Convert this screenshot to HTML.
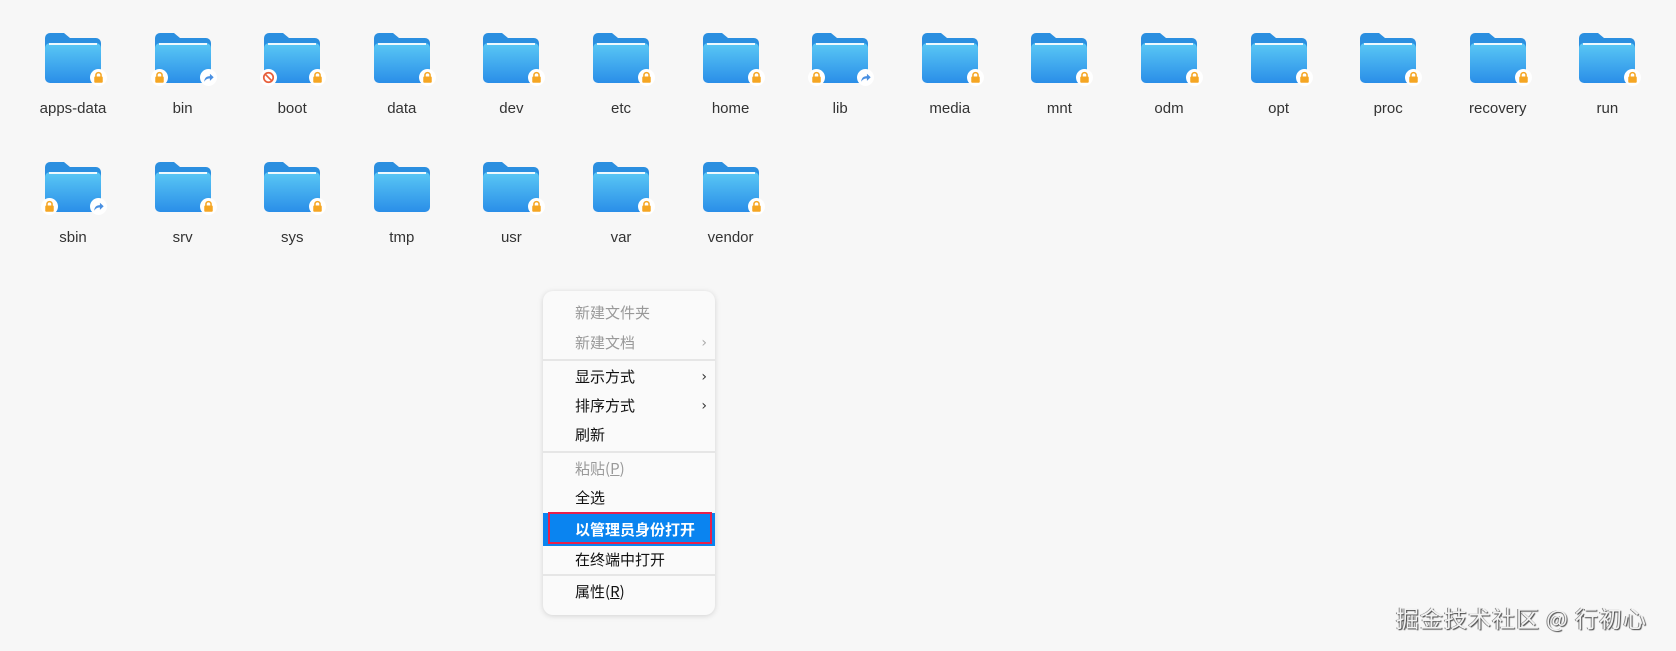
<!DOCTYPE html>
<html><head><meta charset="utf-8"><style>
body{margin:0;width:1676px;height:651px;background:#f7f7f7;font-family:"Liberation Sans","Noto Sans CJK SC",sans-serif;overflow:hidden;position:relative}
.it{position:absolute;width:110px;text-align:center}
.it svg{display:block;margin:0 auto}
.lb{font-size:15px;color:#333;margin-top:16px}
.menu{position:absolute;left:543px;top:291px;width:172px;height:324px;background:#fafafa;border-radius:10px;box-shadow:0 1px 6px rgba(0,0,0,.15)}
.mi{position:absolute;left:0;right:0;height:30px;line-height:30px;padding-left:32px;font-size:15px;color:#111;font-family:"Noto Sans CJK SC",sans-serif}
.dis{color:#999}
.sep{position:absolute;left:0;right:0;height:2px;background:#e6e6e6}
.ar{position:absolute;right:8px;top:0;font-size:14px;color:#333;font-family:"DejaVu Sans",sans-serif}
.wm{position:absolute;left:1396px;top:600px;font-size:23px;color:#f2f2f2;font-family:"Noto Sans CJK SC",sans-serif;text-shadow:1px 1px 1px #444,-1px 0 0 #888;letter-spacing:1px}
</style></head><body>
<svg width="0" height="0" style="position:absolute"><defs>
<linearGradient id="g" x1="0" y1="0" x2="0" y2="1"><stop offset="0" stop-color="#5ac8f5"/><stop offset="1" stop-color="#2a8ee8"/></linearGradient>
<symbol id="f" viewBox="0 0 58 52"><path d="M1 6a5 5 0 0 1 5-5h14l6 5h26a5 5 0 0 1 5 5v30H1z" fill="#2b8fe0"/><rect x="1" y="11" width="56" height="40" rx="5" fill="url(#g)"/><path d="M5 12h48" stroke="#fff" stroke-width="2" opacity=".9"/></symbol>
<symbol id="lk" viewBox="0 0 18 18"><circle cx="9" cy="9" r="9" fill="#fff"/><rect x="4.5" y="8" width="9" height="6.5" rx="1" fill="#f5a623"/><path d="M6.3 8V6.5a2.7 2.7 0 0 1 5.4 0V8" stroke="#f5a623" stroke-width="1.6" fill="none"/></symbol>
<symbol id="sh" viewBox="0 0 18 18"><circle cx="9" cy="9" r="9" fill="#fff"/><path d="M4.5 13.5c0-4 2.5-6 6-6V5l4 3.8-4 3.8V10c-2.6 0-4.5.8-6 3.5z" fill="#4a90e2"/></symbol>
<symbol id="nb" viewBox="0 0 18 18"><circle cx="9" cy="9" r="9" fill="#fff"/><circle cx="9" cy="9" r="5" stroke="#e8603c" stroke-width="1.8" fill="none"/><path d="M5.5 5.5l7 7" stroke="#e8603c" stroke-width="1.8"/></symbol>
</defs></svg>
<div id="grid"></div>
<script>
var r1=[["apps-data","","lk"],["bin","lk","sh"],["boot","nb","lk"],["data","","lk"],["dev","","lk"],["etc","","lk"],["home","","lk"],["lib","lk","sh"],["media","","lk"],["mnt","","lk"],["odm","","lk"],["opt","","lk"],["proc","","lk"],["recovery","","lk"],["run","","lk"]];
var r2=[["sbin","lk","sh"],["srv","","lk"],["sys","","lk"],["tmp","",""],["usr","","lk"],["var","","lk"],["vendor","","lk"]];
var h="";
function add(a,top){a.forEach(function(e,k){var cx=73+109.6*k;
h+='<div class="it" style="left:'+(cx-55)+'px;top:'+top+'px"><div style="position:relative;width:58px;height:52px;margin:0 auto"><svg width="58" height="52"><use href="#f"/></svg>'+
(e[1]?'<svg width="17" height="17" style="position:absolute;left:-3px;top:37px"><use href="#'+e[1]+'"/></svg>':'')+
(e[2]?'<svg width="17" height="17" style="position:absolute;left:46px;top:37px"><use href="#'+e[2]+'"/></svg>':'')+
'</div><div class="lb">'+e[0]+'</div></div>';});}
add(r1,32);add(r2,161);
document.getElementById("grid").innerHTML=h;
</script>
<div class="menu">
<div class="mi dis" style="top:7px">新建文件夹</div>
<div class="mi dis" style="top:37px">新建文档<span class="ar" style="color:#aaa">›</span></div>
<div class="sep" style="top:68px"></div>
<div class="mi" style="top:71px">显示方式<span class="ar">›</span></div>
<div class="mi" style="top:100px">排序方式<span class="ar">›</span></div>
<div class="mi" style="top:129px">刷新</div>
<div class="sep" style="top:160px"></div>
<div class="mi dis" style="top:163px">粘贴(<u>P</u>)</div>
<div class="mi" style="top:192px">全选</div>
<div class="mi" style="top:222px;height:33px;line-height:33px;background:#0a84f0;color:#fff;font-weight:bold;padding-left:32px"> 以管理员身份打开</div>
<div style="position:absolute;left:5px;top:221px;width:164px;height:32px;border:2px solid #e8204a;box-sizing:border-box"></div>
<div class="mi" style="top:254px">在终端中打开</div>
<div class="sep" style="top:283px"></div>
<div class="mi" style="top:286px">属性(<u>R</u>)</div>
</div>
<div class="wm">掘金技术社区 @ 行初心</div>
</body></html>
